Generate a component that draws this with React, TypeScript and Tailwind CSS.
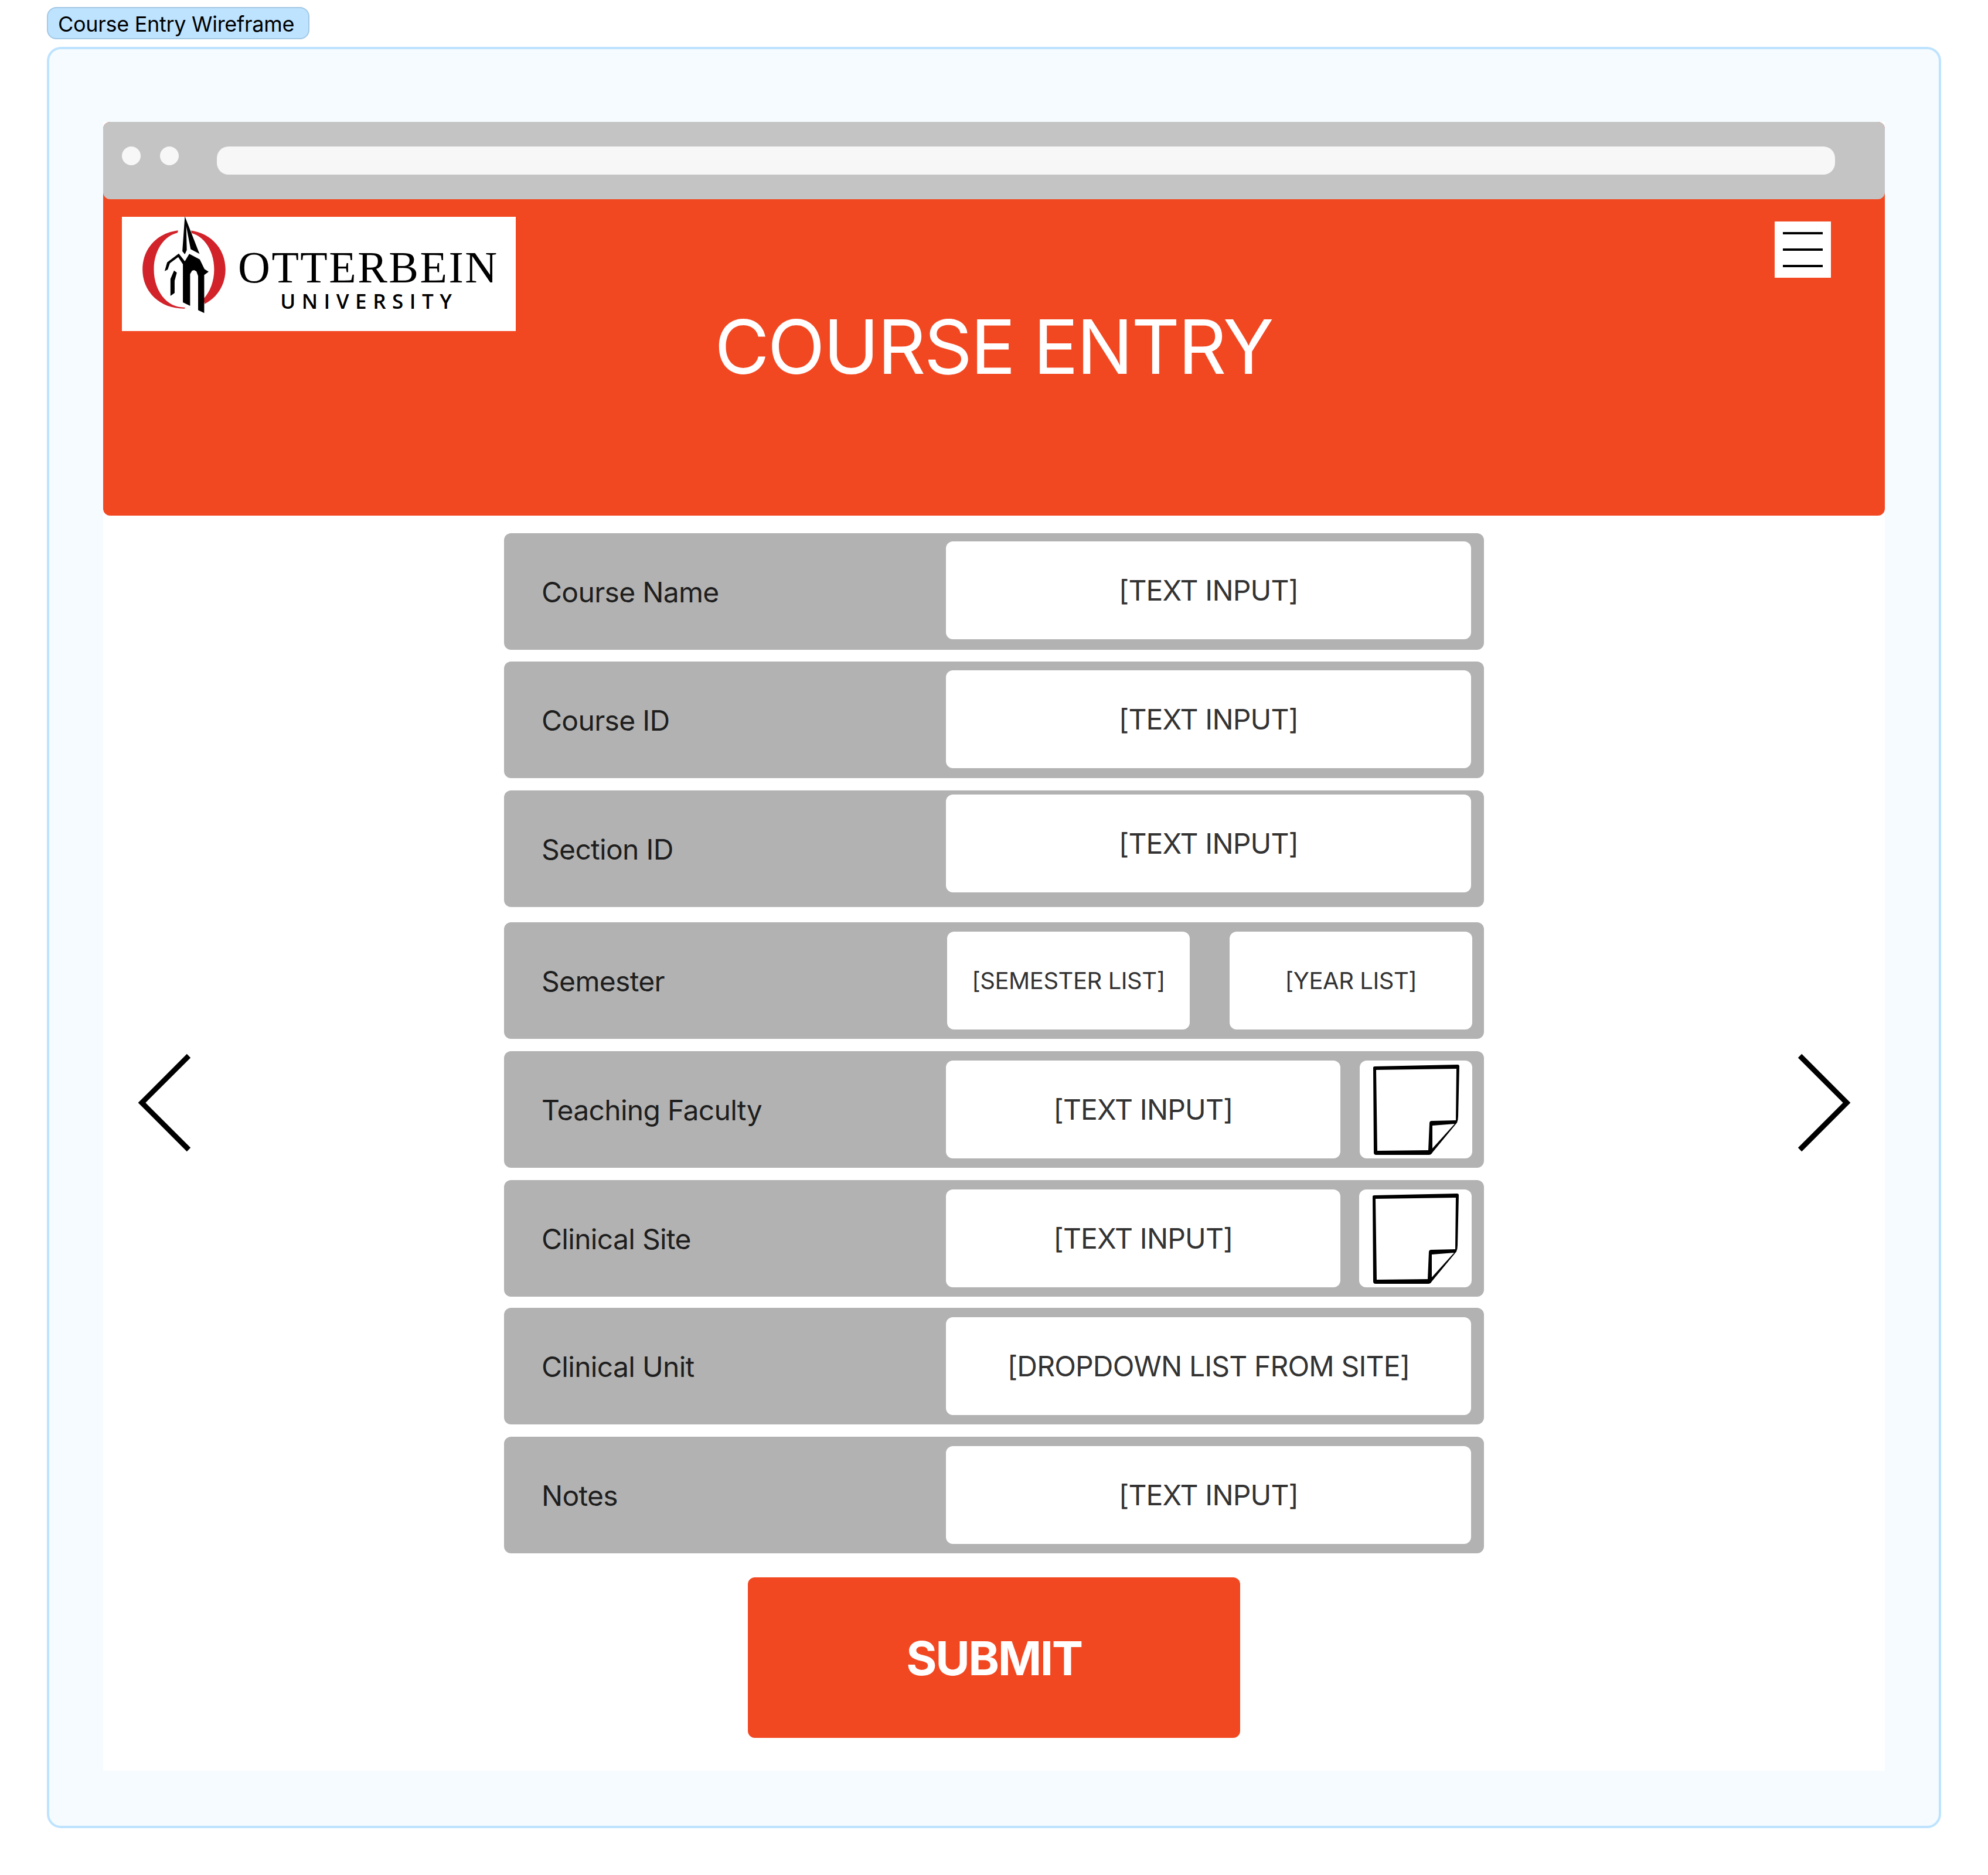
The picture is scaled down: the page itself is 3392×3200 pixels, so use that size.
import React from "react";

const rows = [
  { label: "Course Name", value: "[TEXT INPUT]", row: "mt-[30px]", box: "mt-[14px]" },
  { label: "Course ID", value: "[TEXT INPUT]", row: "mt-[20px]", box: "mt-[15px]" },
  { label: "Section ID", value: "[TEXT INPUT]", row: "mt-[21px]", box: "mt-[7px]" },
  { label: "Semester", kind: "semester", row: "mt-[26px]", box: "mt-[16px]" },
  { label: "Teaching Faculty", value: "[TEXT INPUT]", kind: "noteA", row: "mt-[21px]", box: "mt-[16px]" },
  { label: "Clinical Site", value: "[TEXT INPUT]", kind: "noteB", row: "mt-[21px]", box: "mt-[16px]" },
  { label: "Clinical Unit", value: "[DROPDOWN LIST FROM SITE]", row: "mt-[19px]", box: "mt-[16px]" },
  { label: "Notes", value: "[TEXT INPUT]", row: "mt-[21px]", box: "mt-[16px]" },
];

function NoteIcon() {
  return (
    <svg width="147" height="154" viewBox="0 0 147 154" className="shrink-0">
      <path
        fillRule="evenodd"
        fill="#000"
        d="M0 5 Q0 3 3 3 L144 0 Q147 0 147 3 L145 88 Q145 94 143 99 L101 150 Q99 154 95 154 L5 154 Q1 154 1 150 Z M5 9 L7 147 L94 146 L96 100 Q96 96 100 96 L141 95 L142 7 Z M101 104 L101 143 L139 101 Z"
      />
    </svg>
  );
}

function LogoMark() {
  return (
    <svg width="151" height="170" viewBox="120 80 320 510" preserveAspectRatio="none" className="shrink-0">
      <path
        fillRule="evenodd"
        fill="#d2232a"
        d="M131 361 C131 250 190 160 281 160 C372 160 431 250 431 361 C431 472 372 562 281 562 C190 562 131 472 131 361 Z M172 361 C172 258 215 170 281 170 C347 170 390 258 390 361 C390 464 347 556 281 556 C215 556 172 464 172 361 Z"
      />
      <polygon fill="#fff" points="262,150 255,188 284,200 310,190 305,150" />
      <polygon fill="#fff" points="284,530 284,575 355,575 355,530" />
      <polygon fill="#000" points="284,90 337,282 305,258 289,140 291,262 284,284 275,268" />
      <polygon
        fill="#000"
        points="262,280 220,325 211,370 222,362 230,330 260,298 277,335 277,530 303,548 303,385 310,368 318,365 326,372 332,395 332,570 354,585 354,390 370,373 355,360 338,310 300,282 284,320"
      />
      <polygon fill="#000" points="245,367 255,378 247,420 247,482 232,497 232,410" />
    </svg>
  );
}

function Box({ className, text, small }: { className: string; text?: string; small?: boolean }) {
  return (
    <div
      className={`flex h-[167px] shrink-0 items-center justify-center rounded-[12px] bg-white pt-[1px] text-[#333333] ${
        small ? "text-[40px] tracking-[-0.45px]" : "text-[48px] tracking-[-0.85px]"
      } ${className}`}
    >
      {text}
    </div>
  );
}

export default function App() {
  return (
    <div className="min-h-[3200px] w-[3392px] bg-white pl-[80px] pt-[12px] font-['Inter',sans-serif]">
      <div className="flex h-[55px] w-[448px] items-center rounded-[16px] border-2 border-[#a3c8e5] bg-[#bde3ff] pl-[17px] pt-[3px] text-[36px] tracking-[-0.3px] text-black">
        Course Entry Wireframe
      </div>

      <div className="mt-[13px] h-[3040px] w-[3232px] rounded-[24px] border-4 border-[#bde3ff] bg-[#f5fbff] px-[92px] pt-[124px]">
        <div className="w-[3040px] bg-white">
          <header className="h-[672px] rounded-[12px] bg-[#f24822]">
            <div className="flex h-[132px] items-start rounded-[12px] bg-[#c4c4c4] pl-[32px] pt-[42px]">
              <div className="h-[32px] w-[32px] rounded-full bg-[#f7f7f7]" />
              <div className="ml-[33px] h-[32px] w-[32px] rounded-full bg-[#f7f7f7]" />
              <div className="ml-[65px] h-[48px] w-[2761px] rounded-[20px] bg-[#f7f7f7]" />
            </div>
            <div className="grid grid-cols-[1fr_auto_1fr] items-start px-[32px] pt-[30px]">
              <div className="flex h-[195px] w-[672px] items-start bg-white">
                <div className="ml-[30px] mt-[-4px]">
                  <LogoMark />
                </div>
                <div className="ml-[17px] flex flex-col items-center">
                  <div className="mt-[48px] whitespace-nowrap font-['Liberation_Serif',serif] text-[76px] leading-[76px] tracking-[2.5px] text-black">
                    OTTERBEIN
                  </div>
                  <div className="whitespace-nowrap pl-[3px] font-['Open_Sans',sans-serif] text-[35px] font-semibold leading-[40px] tracking-[10.5px] text-black">
                    UNIVERSITY
                  </div>
                </div>
              </div>
              <h1 className="ml-[-2px] mt-[144px] whitespace-nowrap text-[128px] font-normal leading-[155px] tracking-[-2.9px] text-white">
                COURSE ENTRY
              </h1>
              <div className="mr-[60px] mt-[8px] flex h-[96px] w-[96px] flex-col items-center justify-center gap-[24px] justify-self-end bg-white">
                <div className="h-[4px] w-[68px] bg-black" />
                <div className="h-[4px] w-[68px] bg-black" />
                <div className="h-[4px] w-[68px] bg-black" />
              </div>
            </div>
          </header>

          <main className="flex items-start pb-[56px] pl-[56px]">
            <svg width="96" height="172" viewBox="0 0 96 172" className="mt-[916px] shrink-0">
              <polyline points="90,6 10,86 90,166" fill="none" stroke="#000" strokeWidth="9" />
            </svg>

            <div className="ml-[532px] flex w-[1672px] flex-col">
              {rows.map((r) => (
                <div key={r.label} className={`flex h-[199px] items-start rounded-[12px] bg-[#b2b2b2] ${r.row}`}>
                  <div className="flex h-[199px] w-[754px] items-center pl-[64px] pt-[3px] text-[48px] tracking-[-0.7px] text-[#1e1e1e]">
                    {r.label}
                  </div>
                  {r.kind === "semester" ? (
                    <>
                      <Box className={`ml-[2px] w-[414px] ${r.box}`} text="[SEMESTER LIST]" small />
                      <Box className={`ml-[68px] w-[414px] ${r.box}`} text="[YEAR LIST]" small />
                    </>
                  ) : r.kind === "noteA" || r.kind === "noteB" ? (
                    <>
                      <Box className={`w-[673px] ${r.box}`} text={r.value} />
                      <div
                        className={`flex h-[167px] w-[192px] shrink-0 items-center justify-center rounded-[12px] bg-white ${r.box} ${
                          r.kind === "noteA" ? "ml-[33px]" : "ml-[32px]"
                        }`}
                      >
                        <NoteIcon />
                      </div>
                    </>
                  ) : (
                    <Box className={`w-[896px] ${r.box}`} text={r.value} />
                  )}
                </div>
              ))}

              <button className="mx-auto mt-[41px] flex h-[274px] w-[840px] items-center justify-center rounded-[12px] bg-[#f24822] pt-[2px] text-[80px] font-bold tracking-[-2.5px] text-white">
                SUBMIT
              </button>
            </div>

            <svg width="96" height="172" viewBox="0 0 96 172" className="ml-[532px] mt-[916px] shrink-0">
              <polyline points="7,6 87,86 7,166" fill="none" stroke="#000" strokeWidth="9" />
            </svg>
          </main>
        </div>
      </div>
    </div>
  );
}
